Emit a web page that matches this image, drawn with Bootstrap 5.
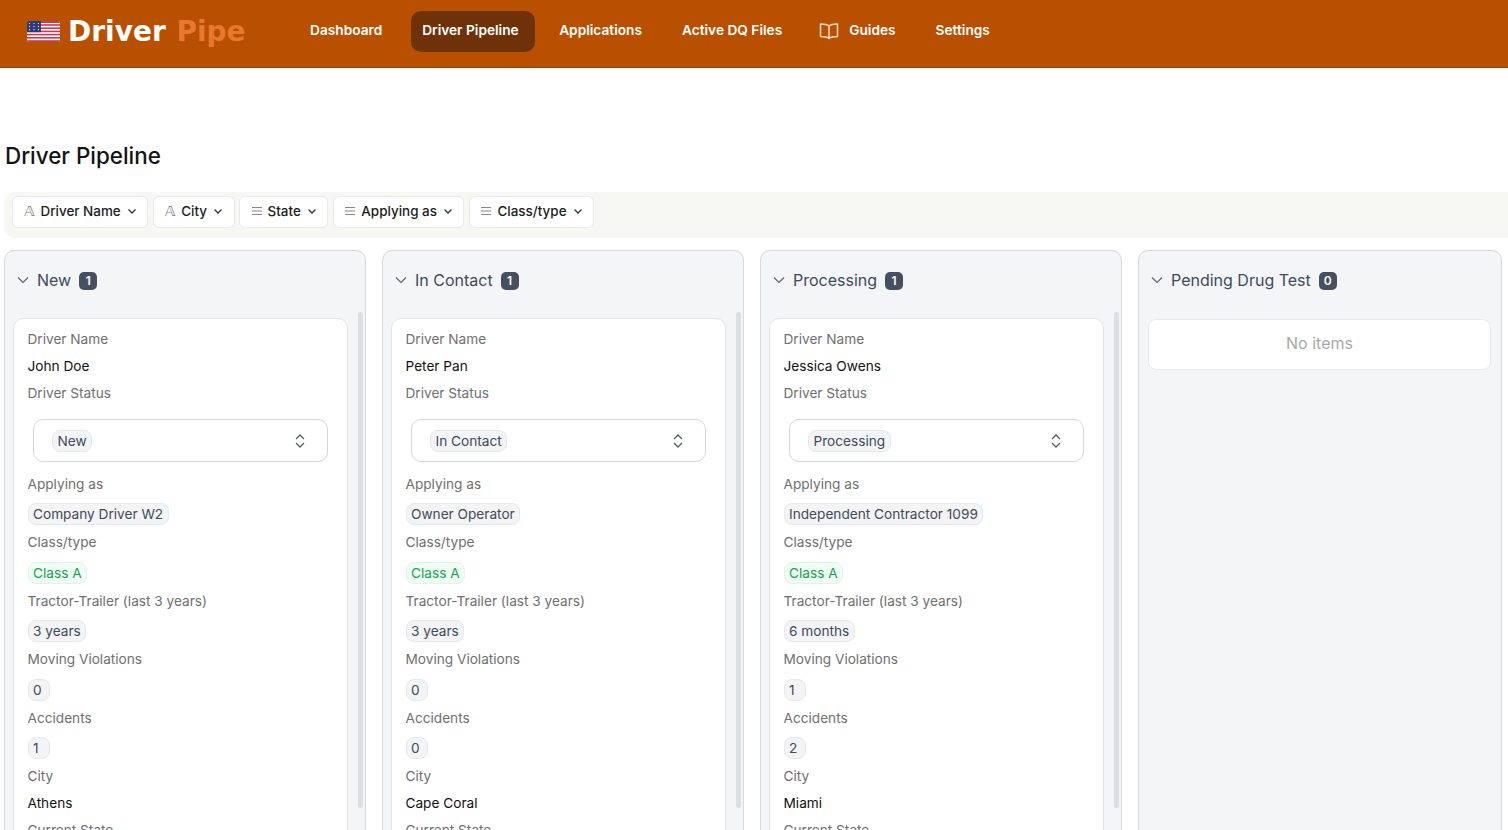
<!DOCTYPE html>
<html lang="en">
<head>
<meta charset="utf-8">
<title>Driver Pipeline</title>
<link href="https://cdn.jsdelivr.net/npm/bootstrap@5.3.0/dist/css/bootstrap.min.css" rel="stylesheet">
<style>
html,body{height:830px;overflow:hidden}
body{font-family:Inter,"Liberation Sans",sans-serif;background:#fff;color:#111}
.top-bar{height:68px;background:#b85000;border-bottom:1px solid #8a3f05;padding:0 0 4px 27px}
.logo-wrap{font-family:"DejaVu Sans",sans-serif;font-weight:700;font-size:28px;line-height:1;color:#fff;width:271.500px;gap:8px}
.logo-wrap em{font-style:normal;color:#e8782e;margin-left:1px}
.logo-flag{width:33px;height:21px;border-radius:2px}
.top-links{gap:17px}
.top-links .nav-link{color:#fff;font-size:13.700px;font-weight:600;padding:0 11.500px 2px;height:41px;display:flex;align-items:center;border-radius:10px}
.top-links .nav-link.active{background:#6f3208;color:#fff;padding-right:16px;margin-right:-4px}
.book-ico{width:20px;height:18px;margin-right:10px;margin-left:-3px}
.page-title{font-size:22.400px;font-weight:500;line-height:32px;margin:0;padding:72px 0 0 5px;color:#141414}
.filter-strip{margin:20px 0 12px 4px;height:46px;background:#f7f7f4;border-radius:10px 0 0 10px;padding:4px 8px;gap:4.500px}
.filter-btn{height:32px;background:#fff;border:1px solid #eaeaea;border-radius:6px;font-size:13.450px;font-weight:500;color:#1c1c1c;padding:0 10.500px 2px;gap:5px;display:flex;align-items:center}
.filter-btn:hover{background:#fff;color:#1c1c1c;border-color:#eaeaea}
.dbl-a{font-family:"DejaVu Sans",sans-serif;font-size:14px;width:12px;color:#777;font-weight:400;line-height:1}
.ln-ico{width:12px;height:12px;color:#888}
.chev-ico{width:10px;height:10px;margin-left:1px;color:#333}
.board{padding:0 6px 0 4px;gap:16px}
.lane{flex:0 0 362px;min-width:0;height:620px;position:relative;background:#f3f5f7;border:1px solid #d5d9dd;border-radius:10px;padding:0 8px}
.lane:last-child{flex:1 1 0}
.lane-head{height:61px;gap:8px;padding-left:4px;padding-bottom:4px;font-size:16px;color:#414a5a}
.lane-head svg{width:12px;height:12px;color:#5c6470;flex:none}
.lane-count{background:#475060;color:#fff;font-size:12px;font-weight:600;border-radius:5px;height:18px;min-width:18px;display:inline-flex;align-items:center;justify-content:center;margin-top:2px}
.lead-card{width:335px;background:#fff;border:1px solid #e2e4e7;border-radius:10px;margin-top:6px;padding:6.500px 13.500px;font-size:13.650px}
.fld-label{line-height:27px;color:#6f6f6f}
.fld-value{line-height:27px;color:#111}
.fld-chip{height:31.500px;padding-top:5.500px}
.pill-tag{display:inline-block;height:22px;line-height:20px;padding:0 4.500px;border:1px solid #e6e8eb;background:#f3f4f6;color:#414a5a;border-radius:8px;font-size:13.650px;vertical-align:top}
.pill-tag.pill-green{color:#16a34a;background:#f0fdf4;border-color:#e1f5e7}
.pill-tag.pill-num{min-width:22px;text-align:left}
.sel-wrap{padding:12.500px 6px 8.500px 5.500px}
.sel-box{height:43px;border:1px solid #d3d6da;border-radius:10px;padding:0 21px 0 18px;display:flex;align-items:center;justify-content:space-between}
.sel-box svg{width:12px;height:16px;color:#555d68}
.lane-thumb{position:absolute;top:61px;right:2px;width:5px;height:496px;background:#dcdee1;border-radius:3px}
.none-card{background:#fff;border:1px solid #e6e8eb;border-radius:8px;height:51px;margin-top:7px;margin-left:1px;margin-right:2px;padding-bottom:3px;color:#a8a8a8;font-size:16px}
</style>
</head>
<body>
<nav class="navbar top-bar d-flex align-items-center flex-nowrap justify-content-start">
  <div class="logo-wrap d-flex align-items-center">
    <svg class="logo-flag" viewBox="0 0 33 21" aria-hidden="true">
      <rect width="33" height="21" fill="#fff"/>
      <g fill="#c8384f"><rect y="0" width="33" height="2"/><rect y="3.200" width="33" height="1.600"/><rect y="6.400" width="33" height="1.600"/><rect y="9.600" width="33" height="1.600"/><rect y="12.800" width="33" height="1.600"/><rect y="16" width="33" height="1.600"/><rect y="19.200" width="33" height="1.800"/></g>
      <rect width="14" height="11.200" fill="#2d3a78"/>
      <g fill="#fff"><circle cx="2.500" cy="2.500" r=".6"/><circle cx="7" cy="2.500" r=".6"/><circle cx="11.500" cy="2.500" r=".6"/><circle cx="2.500" cy="5.600" r=".6"/><circle cx="7" cy="5.600" r=".6"/><circle cx="11.500" cy="5.600" r=".6"/><circle cx="2.500" cy="8.700" r=".6"/><circle cx="7" cy="8.700" r=".6"/><circle cx="11.500" cy="8.700" r=".6"/></g>
    </svg>
    <span>Driver <em>Pipe</em></span>
  </div>
  <ul class="nav top-links flex-nowrap">
    <li class="nav-item"><a class="nav-link" href="#">Dashboard</a></li>
    <li class="nav-item"><a class="nav-link active" href="#">Driver Pipeline</a></li>
    <li class="nav-item"><a class="nav-link" href="#">Applications</a></li>
    <li class="nav-item"><a class="nav-link" href="#">Active DQ Files</a></li>
    <li class="nav-item"><a class="nav-link" href="#"><svg class="book-ico" viewBox="0 0 20 18" fill="none" stroke="#ffdcbf" stroke-width="1.500" stroke-linejoin="round" aria-hidden="true"><path d="M10 4C8.500 2.500 6 2 1.500 2v12.500c4.500 0 7 .5 8.500 2 1.500-1.500 4-2 8.500-2V2C14 2 11.500 2.500 10 4zM10 4v12.500"/></svg>Guides</a></li>
    <li class="nav-item"><a class="nav-link" href="#">Settings</a></li>
  </ul>
</nav>

<h1 class="page-title">Driver Pipeline</h1>

<div class="filter-strip d-flex align-items-start">
  <button class="btn filter-btn" type="button"><span class="dbl-a">𝔸</span>Driver Name<svg class="chev-ico" viewBox="0 0 10 10" fill="none" stroke="currentColor" stroke-width="1.300" aria-hidden="true"><path d="M1.500 3.500 5 7l3.500-3.500"/></svg></button>
  <button class="btn filter-btn" type="button"><span class="dbl-a">𝔸</span>City<svg class="chev-ico" viewBox="0 0 10 10" fill="none" stroke="currentColor" stroke-width="1.300" aria-hidden="true"><path d="M1.500 3.500 5 7l3.500-3.500"/></svg></button>
  <button class="btn filter-btn" type="button"><svg class="ln-ico" viewBox="0 0 12 12" stroke="currentColor" aria-hidden="true"><path d="M1 2.500h10M1 6h10M1 9.500h10"/></svg>State<svg class="chev-ico" viewBox="0 0 10 10" fill="none" stroke="currentColor" stroke-width="1.300" aria-hidden="true"><path d="M1.500 3.500 5 7l3.500-3.500"/></svg></button>
  <button class="btn filter-btn" type="button"><svg class="ln-ico" viewBox="0 0 12 12" stroke="currentColor" aria-hidden="true"><path d="M1 2.500h10M1 6h10M1 9.500h10"/></svg>Applying as<svg class="chev-ico" viewBox="0 0 10 10" fill="none" stroke="currentColor" stroke-width="1.300" aria-hidden="true"><path d="M1.500 3.500 5 7l3.500-3.500"/></svg></button>
  <button class="btn filter-btn" type="button"><svg class="ln-ico" viewBox="0 0 12 12" stroke="currentColor" aria-hidden="true"><path d="M1 2.500h10M1 6h10M1 9.500h10"/></svg>Class/type<svg class="chev-ico" viewBox="0 0 10 10" fill="none" stroke="currentColor" stroke-width="1.300" aria-hidden="true"><path d="M1.500 3.500 5 7l3.500-3.500"/></svg></button>
</div>

<div class="board d-flex align-items-start">
  <section class="lane">
    <header class="lane-head d-flex align-items-center"><svg viewBox="0 0 12 12" fill="none" stroke="currentColor" stroke-width="1.200" aria-hidden="true"><path d="M1 3.500 6 8.500l5-5"/></svg><span>New</span><span class="lane-count">1</span></header>
    <article class="lead-card">
      <div class="fld-label">Driver Name</div><div class="fld-value">John Doe</div>
      <div class="fld-label">Driver Status</div>
      <div class="sel-wrap"><div class="sel-box"><span class="pill-tag">New</span><svg viewBox="0 0 12 16" fill="none" stroke="currentColor" stroke-width="1.300" aria-hidden="true"><path d="M2 6l4-4 4 4M2 10l4 4 4-4"/></svg></div></div>
      <div class="fld-label">Applying as</div><div class="fld-chip"><span class="pill-tag">Company Driver W2</span></div>
      <div class="fld-label">Class/type</div><div class="fld-chip"><span class="pill-tag pill-green">Class A</span></div>
      <div class="fld-label">Tractor-Trailer (last 3 years)</div><div class="fld-chip"><span class="pill-tag">3 years</span></div>
      <div class="fld-label">Moving Violations</div><div class="fld-chip"><span class="pill-tag pill-num">0</span></div>
      <div class="fld-label">Accidents</div><div class="fld-chip"><span class="pill-tag pill-num">1</span></div>
      <div class="fld-label">City</div><div class="fld-value">Athens</div>
      <div class="fld-label">Current State</div>
    </article>
    <div class="lane-thumb"></div>
  </section>

  <section class="lane">
    <header class="lane-head d-flex align-items-center"><svg viewBox="0 0 12 12" fill="none" stroke="currentColor" stroke-width="1.200" aria-hidden="true"><path d="M1 3.500 6 8.500l5-5"/></svg><span>In Contact</span><span class="lane-count">1</span></header>
    <article class="lead-card">
      <div class="fld-label">Driver Name</div><div class="fld-value">Peter Pan</div>
      <div class="fld-label">Driver Status</div>
      <div class="sel-wrap"><div class="sel-box"><span class="pill-tag">In Contact</span><svg viewBox="0 0 12 16" fill="none" stroke="currentColor" stroke-width="1.300" aria-hidden="true"><path d="M2 6l4-4 4 4M2 10l4 4 4-4"/></svg></div></div>
      <div class="fld-label">Applying as</div><div class="fld-chip"><span class="pill-tag">Owner Operator</span></div>
      <div class="fld-label">Class/type</div><div class="fld-chip"><span class="pill-tag pill-green">Class A</span></div>
      <div class="fld-label">Tractor-Trailer (last 3 years)</div><div class="fld-chip"><span class="pill-tag">3 years</span></div>
      <div class="fld-label">Moving Violations</div><div class="fld-chip"><span class="pill-tag pill-num">0</span></div>
      <div class="fld-label">Accidents</div><div class="fld-chip"><span class="pill-tag pill-num">0</span></div>
      <div class="fld-label">City</div><div class="fld-value">Cape Coral</div>
      <div class="fld-label">Current State</div>
    </article>
    <div class="lane-thumb"></div>
  </section>

  <section class="lane">
    <header class="lane-head d-flex align-items-center"><svg viewBox="0 0 12 12" fill="none" stroke="currentColor" stroke-width="1.200" aria-hidden="true"><path d="M1 3.500 6 8.500l5-5"/></svg><span>Processing</span><span class="lane-count">1</span></header>
    <article class="lead-card">
      <div class="fld-label">Driver Name</div><div class="fld-value">Jessica Owens</div>
      <div class="fld-label">Driver Status</div>
      <div class="sel-wrap"><div class="sel-box"><span class="pill-tag">Processing</span><svg viewBox="0 0 12 16" fill="none" stroke="currentColor" stroke-width="1.300" aria-hidden="true"><path d="M2 6l4-4 4 4M2 10l4 4 4-4"/></svg></div></div>
      <div class="fld-label">Applying as</div><div class="fld-chip"><span class="pill-tag">Independent Contractor 1099</span></div>
      <div class="fld-label">Class/type</div><div class="fld-chip"><span class="pill-tag pill-green">Class A</span></div>
      <div class="fld-label">Tractor-Trailer (last 3 years)</div><div class="fld-chip"><span class="pill-tag">6 months</span></div>
      <div class="fld-label">Moving Violations</div><div class="fld-chip"><span class="pill-tag pill-num">1</span></div>
      <div class="fld-label">Accidents</div><div class="fld-chip"><span class="pill-tag pill-num">2</span></div>
      <div class="fld-label">City</div><div class="fld-value">Miami</div>
      <div class="fld-label">Current State</div>
    </article>
    <div class="lane-thumb"></div>
  </section>

  <section class="lane">
    <header class="lane-head d-flex align-items-center"><svg viewBox="0 0 12 12" fill="none" stroke="currentColor" stroke-width="1.200" aria-hidden="true"><path d="M1 3.500 6 8.500l5-5"/></svg><span>Pending Drug Test</span><span class="lane-count">0</span></header>
    <div class="none-card d-flex align-items-center justify-content-center">No items</div>
  </section>
</div>
<script src="https://cdn.jsdelivr.net/npm/bootstrap@5.3.0/dist/js/bootstrap.bundle.min.js"></script>
</body>
</html>
